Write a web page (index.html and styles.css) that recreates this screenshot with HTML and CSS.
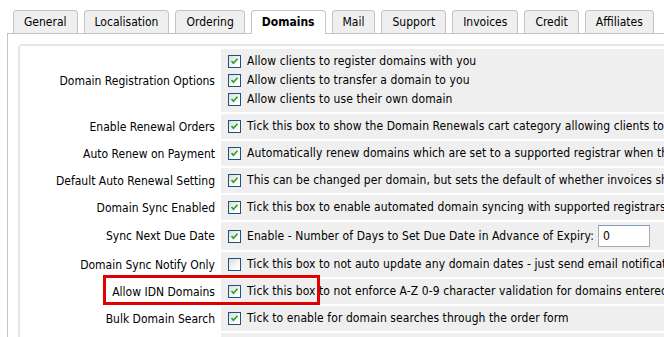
FILE: index.html
```html
<!DOCTYPE html>
<html>
<head>
<meta charset="utf-8">
<link rel="stylesheet" href="styles.css">
</head>
<body>
<div class="page">
  <ul class="tabs">
    <li class="tab">General</li>
    <li class="tab">Localisation</li>
    <li class="tab">Ordering</li>
    <li class="tab active">Domains</li>
    <li class="tab">Mail</li>
    <li class="tab">Support</li>
    <li class="tab">Invoices</li>
    <li class="tab">Credit</li>
    <li class="tab">Affiliates</li>
  </ul>
  <div class="tabbox">
    <div class="panel">
      <table class="form">
        <colgroup><col class="c-label"><col class="c-field"></colgroup>
        <tr>
          <td class="label">Domain Registration Options</td>
          <td class="field">
            <div class="line"><span class="cb on"><svg viewBox="0 0 13 13"><path d="M3 6 L5.2 8.6 L10 3.2" /></svg></span>Allow clients to register domains with you</div>
            <div class="line"><span class="cb on"><svg viewBox="0 0 13 13"><path d="M3 6 L5.2 8.6 L10 3.2" /></svg></span>Allow clients to transfer a domain to you</div>
            <div class="line"><span class="cb on"><svg viewBox="0 0 13 13"><path d="M3 6 L5.2 8.6 L10 3.2" /></svg></span>Allow clients to use their own domain</div>
          </td>
        </tr>
        <tr>
          <td class="label">Enable Renewal Orders</td>
          <td class="field"><div class="line"><span class="cb on"><svg viewBox="0 0 13 13"><path d="M3 6 L5.2 8.6 L10 3.2" /></svg></span>Tick this box to show the Domain Renewals cart category allowing clients to renew their domains</div></td>
        </tr>
        <tr>
          <td class="label">Auto Renew on Payment</td>
          <td class="field"><div class="line"><span class="cb on"><svg viewBox="0 0 13 13"><path d="M3 6 L5.2 8.6 L10 3.2" /></svg></span>Automatically renew domains which are set to a supported registrar when the renewal invoice is paid</div></td>
        </tr>
        <tr>
          <td class="label">Default Auto Renewal Setting</td>
          <td class="field"><div class="line"><span class="cb on"><svg viewBox="0 0 13 13"><path d="M3 6 L5.2 8.6 L10 3.2" /></svg></span>This can be changed per domain, but sets the default of whether invoices should be generated</div></td>
        </tr>
        <tr>
          <td class="label">Domain Sync Enabled</td>
          <td class="field"><div class="line"><span class="cb on"><svg viewBox="0 0 13 13"><path d="M3 6 L5.2 8.6 L10 3.2" /></svg></span>Tick this box to enable automated domain syncing with supported registrars</div></td>
        </tr>
        <tr class="tall">
          <td class="label">Sync Next Due Date</td>
          <td class="field"><div class="line"><span class="cb on"><svg viewBox="0 0 13 13"><path d="M3 6 L5.2 8.6 L10 3.2" /></svg></span>Enable - Number of Days to Set Due Date in Advance of Expiry: <span class="input">0</span></div></td>
        </tr>
        <tr>
          <td class="label">Domain Sync Notify Only</td>
          <td class="field"><div class="line"><span class="cb"></span>Tick this box to not auto update any domain dates - just send email notifications</div></td>
        </tr>
        <tr>
          <td class="label">Allow IDN Domains</td>
          <td class="field"><div class="line"><span class="cb on"><svg viewBox="0 0 13 13"><path d="M3 6 L5.2 8.6 L10 3.2" /></svg></span>Tick this box to not enforce A-Z 0-9 character validation for domains entered</div></td>
        </tr>
        <tr>
          <td class="label">Bulk Domain Search</td>
          <td class="field"><div class="line"><span class="cb on"><svg viewBox="0 0 13 13"><path d="M3 6 L5.2 8.6 L10 3.2" /></svg></span>Tick to enable for domain searches through the order form</div></td>
        </tr>
        <tr>
          <td class="label">&nbsp;</td>
          <td class="field">&nbsp;</td>
        </tr>
      </table>
    </div>
  </div>
  <div class="highlight"></div>
</div>
</body>
</html>
```
FILE: styles.css
```css
html, body {
  margin: 0;
  padding: 0;
  background: #fff;
}
body {
  width: 664px;
  height: 337px;
  overflow: hidden;
  font-family: "DejaVu Sans Condensed", "DejaVu Sans", sans-serif;
  font-size: 12px;
  color: #000;
}
.page {
  position: relative;
  padding-top: 10px;
}
.tabs {
  list-style: none;
  margin: 0;
  padding: 0 0 0 13px;
  display: flex;
  gap: 6px;
  height: 23px;
  position: relative;
  z-index: 1;
}
.tab {
  border: 1px solid #c4c4c4;
  border-bottom: none;
  border-radius: 4px 4px 0 0;
  background: #efefef;
  padding: 0 10px;
  height: 22px;
  line-height: 23px;
  white-space: nowrap;
}
.tab.active {
  background: #fff;
  font-weight: bold;
  height: 23px;
}
.tabbox {
  margin-left: 7px;
  border-top: 1px solid #c4c4c4;
  border-left: 1px solid #c4c4c4;
  padding: 10px 0 0 10px;
}
.panel {
  width: 1000px;
  border: 2px solid #e2e8eb;
  border-right: none;
  border-radius: 4px 0 0 0;
  padding-top: 1px;
}
.form {
  table-layout: fixed;
  width: 1000px;
  border-collapse: separate;
  border-spacing: 2px;
}
.c-label {
  width: 197px;
}
.form td {
  padding: 3px 0;
  vertical-align: middle;
  white-space: nowrap;
  overflow: hidden;
}
.form .label {
  text-align: right;
  padding-right: 4px;
  background: #fff;
}
.form .field {
  background: #efefef;
  padding-left: 7px;
  padding-right: 6px;
  letter-spacing: 0.08px;
}
.line {
  height: 19px;
  line-height: 19px;
  display: flex;
  align-items: center;
}
.cb {
  width: 11px;
  height: 11px;
  border: 1px solid #1c5180;
  background: linear-gradient(135deg, #dcdcd7 0%, #fbfbfa 70%, #fff 100%);
  margin-right: 6px;
  flex: none;
  display: inline-flex;
}
.cb svg {
  width: 11px;
  height: 11px;
}
.cb svg path {
  fill: none;
  stroke: #22a822;
  stroke-width: 2;
}
.tall .line {
  height: 22px;
}
.input {
  display: inline-block;
  margin-left: 4px;
  width: 46px;
  height: 20px;
  line-height: 20px;
  padding-left: 4px;
  border: 1px solid #a5acb2;
  border-top-color: #7f9db9;
  background: #fff;
}
.highlight {
  position: absolute;
  left: 103px;
  top: 275px;
  width: 211px;
  height: 24px;
  border: 3px solid #e00000;
}
```
